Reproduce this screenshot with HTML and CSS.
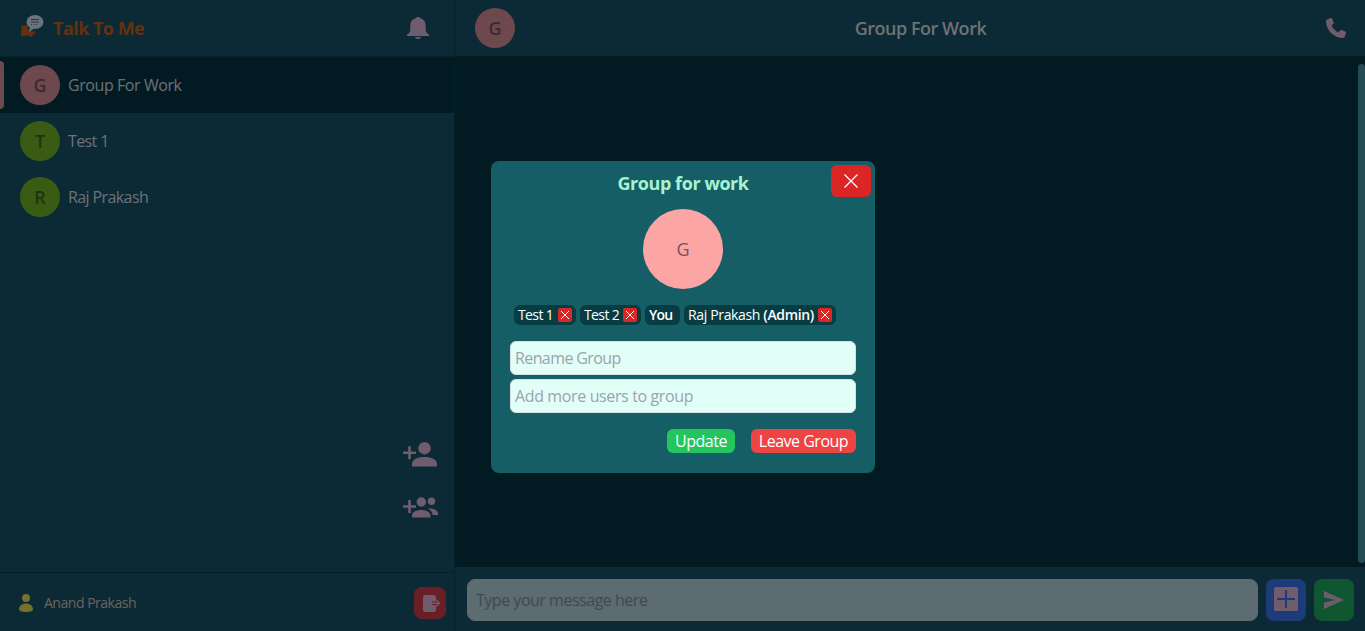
FILE: index.html
```html
<!DOCTYPE html>
<html lang="en">
<head>
<meta charset="utf-8">
<title>Talk To Me</title>
<link rel="stylesheet" href="styles.css">
</head>
<body>
<div class="app">
  <aside class="sidebar">
    <header class="brand-bar">
      <svg class="logo" viewBox="0 0 24 24"><path class="logo-back" d="M1.500 11.500q0-1 1-1h4.500c.5 4 2 5.500 5 6h3v1c0 1.500-1 2.500-2.200 2.500H12v2.500L9 20.500H4.500L1 21.500Z"/><ellipse class="logo-front" cx="15" cy="7" rx="8.500" ry="6.900"/><path class="logo-front" d="m10 12-1 5 5-3.500Z"/><path class="logo-lines" d="M11 4.500h8M11 7h8M11 9.500h1m1.500 0h1m1.500 0h1"/></svg>
      <h1 class="brand">Talk To Me</h1>
      <svg class="bell" viewBox="0 0 22 22"><path d="M11 0c1.200 0 2 .7 2.200 1.300 3.700.8 5.500 3.300 5.500 6.900v5.300c.5 2 1.500 3 3.300 4V19H0v-1.500c1.800-1 2.800-2 3.300-4V8.200c0-3.600 1.800-6.100 5.500-6.900C9 .7 9.800 0 11 0ZM8 20h6c-.5 1.300-1.500 2-3 2s-2.500-.7-3-2Z"/></svg>
    </header>
    <div class="chats">
      <div class="chat active"><span class="marker"></span><span class="avatar rose">G</span><span class="name n-group">Group For Work</span></div>
      <div class="chat"><span class="avatar lime">T</span><span class="name n-test">Test 1</span></div>
      <div class="chat"><span class="avatar lime">R</span><span class="name n-raj">Raj Prakash</span></div>
    </div>
    <div class="add-actions">
      <svg class="add-user" viewBox="0 0 34 25"><path class="plus" d="M0 10.700h13M6.500 4.200v13"/><circle cx="21.500" cy="6.200" r="6.200"/><path d="M9 24.500v-2.500c0-4.400 5.600-7 12.500-7s12.500 2.600 12.500 7v2.500Z"/></svg>
      <svg class="add-group" viewBox="0 0 35 21"><path class="plus" d="M0 9.500h13M6.500 3v13"/><circle cx="18.300" cy="5" r="4.700"/><circle cx="28.500" cy="4.200" r="3.700"/><path d="M9 20.500V18.500c0-3.300 4.100-5.500 9.200-5.500s9.300 2.200 9.300 5.500v2ZM24.500 11.600c5.600-.8 10.500 1.400 10.500 4.900v1.500h-5.500c0-3-2-5.300-5-6.400Z"/></svg>
    </div>
    <footer class="account">
      <svg class="person" viewBox="0 0 14 18"><circle cx="7" cy="4" r="4"/><path d="M0 15.500C0 11.700 3 9.500 7 9.500s7 2.200 7 6c0 1-2.500 2.500-7 2.500s-7-1.500-7-2.500Z"/></svg>
      <span class="account-name">Anand Prakash</span>
      <span class="logout"><svg viewBox="0 0 18 17"><rect width="13" height="17" rx="2.500"/><path class="exit-edge" d="M9 8.200h7M13.200 4.800l3.600 3.400-3.600 3.400"/><path class="exit-arrow" d="M8.500 8.200h8M13 5l3.500 3.200L13 11.400"/></svg></span>
    </footer>
  </aside>
  <main class="conversation">
    <header class="conversation-bar">
      <span class="avatar rose">G</span>
      <h2 class="conversation-title">Group For Work</h2>
      <svg class="phone" viewBox="0 0 20 20"><path d="M1.300 1.500 4.500.1c.7-.3 1.400 0 1.700.7l1.500 3.600c.3.600.1 1.200-.4 1.600L5.600 7.500c1.300 3 3.800 5.500 6.800 6.900l1.600-1.900c.4-.5 1-.6 1.600-.4l3.600 1.500c.7.300 1 1 .7 1.700l-1.200 3.500c-.2.700-.8 1.100-1.500 1.100C7.800 19.900 0 12.200 0 2.900c0-.6.600-1.200 1.300-1.400Z"/></svg>
    </header>
    <div class="messages"><span class="scroll-thumb"></span></div>
    <footer class="composer">
      <input class="message-input" placeholder="Type your message here">
      <span class="tool attach"><svg viewBox="0 0 24 24"><rect width="24" height="24" rx="1.500"/><path d="M3 12h18M12 3v18"/></svg></span>
      <span class="tool send"><svg viewBox="0 0 20 18"><path d="M0 0 20 9 0 18v-6.500L11.500 9 0 6.500Z"/></svg></span>
    </footer>
  </main>
</div>
<section class="modal">
  <span class="close"><svg viewBox="0 0 14 14"><path d="m.5.5 13 13m0-13-13 13"/></svg></span>
  <h3 class="modal-title">Group for work</h3>
  <span class="group-avatar">G</span>
  <div class="members">
    <span class="member m-test"><span class="member-name">Test 1</span><svg class="remove" viewBox="0 0 14 14"><path d="m3 3 8 8m0-8-8 8"/></svg></span>
    <span class="member m-test2"><span class="member-name">Test 2</span><svg class="remove" viewBox="0 0 14 14"><path d="m3 3 8 8m0-8-8 8"/></svg></span>
    <span class="member m-you"><b>You</b></span>
    <span class="member m-admin"><span class="member-name">Raj Prakash <b>(Admin)</b></span><svg class="remove" viewBox="0 0 14 14"><path d="m3 3 8 8m0-8-8 8"/></svg></span>
  </div>
  <input class="field rename" placeholder="Rename Group">
  <input class="field add-more" placeholder="Add more users to group">
  <div class="modal-actions"><button class="update">Update</button><button class="leave">Leave Group</button></div>
</section>
</body>
</html>
```
FILE: styles.css
```css
* { box-sizing: border-box; }
body { margin: 0; overflow: hidden; font-family: "Segoe UI", "Open Sans", "Noto Sans", sans-serif; font-size: 16px; line-height: 24px; background: #021b23; }
h1, h2, h3 { margin: 0; font-size: 18px; line-height: 28px; font-weight: 600; }
svg { display: block; flex: none; fill: #6f5c6d; }
input, button { font: inherit; }
.app { display: flex; width: 100vw; height: 631px; }
.sidebar { width: 455px; flex: none; display: flex; flex-direction: column; background: #0c2a35; border-right: 1px solid #06202a; }
.brand-bar { height: 57px; flex: none; display: flex; align-items: center; padding: 0 25px 0 20px; border-bottom: 1px solid #07222c; }
.logo { width: 24px; height: 24px; margin-top: -2px; }
.logo-back { fill: #682f0b; }
.logo-front { fill: #69747c; }
.logo-lines { stroke: #26363f; stroke-width: 1; fill: none; }
.brand { margin-left: 9px; color: #66300f; font-weight: 700; letter-spacing: -.53px; }
.bell { width: 22px; height: 22px; margin-left: auto; }
.chat { height: 56px; display: flex; align-items: center; padding-left: 20px; position: relative; color: #6d7278; }
.chat.active { background: #021b23; }
.marker { position: absolute; left: 0; top: 4px; width: 4px; height: 48px; border-radius: 0 4px 4px 0; background: #6b4a50; }
.avatar { width: 40px; height: 40px; flex: none; border-radius: 50%; display: flex; align-items: center; justify-content: center; font-size: 18px; font-weight: 600; }
.rose { background: #6d494e; color: #3c292e; }
.lime { background: #3a5b13; color: #1f350d; }
.name { margin-left: 8px; white-space: nowrap; }
.n-group { letter-spacing: -.42px; }
.n-test { letter-spacing: -.6px; }
.n-raj { letter-spacing: -.6px; }
.add-actions { margin-top: auto; display: flex; flex-direction: column; gap: 30px; padding: 0 16px 54px 0; align-items: flex-end; }
.add-user { width: 34px; height: 25px; margin-right: 1px; }
.add-group { width: 35px; height: 21px; }
.plus { stroke: #6f5c6d; stroke-width: 2.600; }
.account { height: 59px; flex: none; border-top: 1px solid #06202a; display: flex; align-items: center; padding: 2px 8px 0 19px; }
.person { width: 14px; height: 18px; fill: #74712e; }
.account-name { margin-left: 11px; font-size: 14px; color: #70635d; letter-spacing: -.48px; }
.logout { width: 32px; height: 32px; margin-left: auto; border-radius: 8px; background: #6a1f27; display: flex; align-items: center; justify-content: center; }
.logout svg { width: 18px; height: 17px; margin-left: 3px; }
.exit-arrow { stroke: #6f5c6d; stroke-width: 1.400; fill: none; }
.exit-edge { stroke: #6a1f27; stroke-width: 3.500; fill: none; }
.conversation { flex: 1; display: flex; flex-direction: column; min-width: 0; }
.conversation-bar { height: 56px; flex: none; background: #0c2a35; display: flex; align-items: center; justify-content: space-between; padding: 0 19px 0 20px; }
.conversation-title { color: #6f7276; letter-spacing: -.48px; }
.phone { width: 20px; height: 20px; }
.messages { flex: 1; display: flex; justify-content: flex-end; padding: 8px 0 4px; }
.scroll-thumb { width: 7px; border-radius: 4px; background: #244c53; }
.composer { height: 64px; flex: none; background: #0c2a35; display: flex; gap: 8px; padding: 12px 11px 10px 12px; }
.message-input { flex: 1; min-width: 0; border: 1px solid #656a70; border-radius: 8px; background: #5d6c70; padding: 0 8px; outline: 0; letter-spacing: -.48px; }
.message-input::placeholder { color: #404854; opacity: 1; }
.tool { width: 40px; border-radius: 8px; display: flex; align-items: center; justify-content: center; }
.attach { background: #1c3b78; }
.attach svg { width: 24px; height: 24px; margin-top: -2px; }
.attach path { stroke: #1c3b78; stroke-width: 2; }
.send { background: #105630; }
.send svg { width: 20px; height: 18px; }
.modal { position: absolute; left: 491px; top: 161px; width: 384px; height: 312px; padding: 8px 19px; border-radius: 8px; background: #155e66; display: flex; flex-direction: column; color: #fff; }
.modal-title { align-self: center; color: #a7f3d0; font-weight: 700; letter-spacing: -.42px; }
.close { position: absolute; right: 4px; top: 4px; width: 40px; height: 32px; border-radius: 6px; background: #dc2626; display: flex; align-items: center; justify-content: center; }
.close svg { width: 14px; height: 14px; stroke: #fff; stroke-width: 1.300; }
.group-avatar { align-self: center; width: 80px; height: 80px; margin-top: 12px; border-radius: 50%; background: #fca5a5; color: #7e5353; display: flex; align-items: center; justify-content: center; font-size: 18px; font-weight: 500; }
.members { display: flex; gap: 4px; margin: 16px 0 16px 4px; font-size: 14px; line-height: 20px; white-space: nowrap; }
.member { height: 20px; border-radius: 6px; background: #083c43; padding: 0 4px; display: flex; align-items: center; justify-content: space-between; }
.member b { font-weight: 600; }
.m-test { width: 62px; letter-spacing: -.6px; }
.m-test2 { width: 61px; letter-spacing: -.6px; }
.m-you { width: 35px; letter-spacing: -.8px; }
.m-admin { width: 152px; letter-spacing: -.35px; }
.remove { width: 14px; height: 14px; border-radius: 2px; background: #dc2626; stroke: #fff; stroke-width: 1; }
.field { height: 34px; border: 1px solid #d7e1e3; border-radius: 6px; padding: 0 4px; background: #e1fef7; outline: 0; }
.field::placeholder { color: #9ca3af; opacity: 1; }
.field + .field { margin-top: 4px; }
.rename { letter-spacing: -.6px; }
.add-more { letter-spacing: -.37px; }
.modal-actions { margin-top: 16px; display: flex; justify-content: flex-end; gap: 16px; }
.modal-actions button { height: 24px; padding: 0; border: 0; border-radius: 6px; color: #fff; white-space: nowrap; line-height: 24px; }
.modal-actions .update { width: 68px; background: #22c55e; letter-spacing: -.5px; }
.modal-actions .leave { width: 105px; background: #ef4444; letter-spacing: -.5px; }
```
